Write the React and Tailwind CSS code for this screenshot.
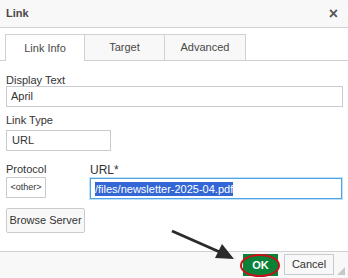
import React from "react";

export default function App() {
  return (
    <div className="relative flex h-[278px] w-[348px] flex-col overflow-hidden bg-white text-[12px] text-[#333] [font-family:'Liberation_Sans',Arial,sans-serif]">
      {/* header */}
      <div className="flex h-[28px] items-center justify-between border-b border-[#d1d1d1] bg-[#f8f8f8] pl-[6px] pr-[10px]">
        <span className="text-[11px] font-bold text-[#484848]">Link</span>
        <span className="text-[16px] font-bold leading-none text-[#555]">×</span>
      </div>

      {/* tabs */}
      <div className="mt-[6px] flex border-b border-[#d1d1d1] pl-[5px]">
        <div className="-mb-px flex h-[27px] w-[80px] items-center justify-center border border-b-0 border-[#d1d1d1] bg-white text-[11px] text-[#484848]">
          Link Info
        </div>
        <div className="flex h-[26px] w-[80px] items-center justify-center border border-l-0 border-[#d1d1d1] border-b-0 bg-[#f8f8f8] text-[11px] text-[#484848]">
          Target
        </div>
        <div className="flex h-[26px] w-[81px] items-center justify-center border border-l-0 border-[#d1d1d1] border-b-0 bg-[#f8f8f8] text-[11px] text-[#484848]">
          Advanced
        </div>
      </div>

      {/* body */}
      <div className="flex flex-1 flex-col px-[6px] pt-[13px]">
        <div className="text-[11px] leading-[12px]">Display Text</div>
        <div className="flex h-[21px] w-[337px] items-center border border-[#c9cccf] px-[4px] text-[11px]">April</div>

        <div className="mt-[7px] text-[11px] leading-[12px]">Link Type</div>
        <div className="mt-[4px] flex h-[21px] w-[105px] items-center border border-[#c9cccf] px-[5px] text-[11px]">URL</div>

        <div className="mt-[12px] flex">
          <div className="flex w-[84px] flex-col">
            <div className="text-[11px] leading-[12px]">Protocol</div>
            <div className="mt-[2px] flex h-[21px] w-[40px] items-center justify-center border border-[#c9cccf] text-[9px]">&lt;other&gt;</div>
          </div>
          <div className="flex flex-col pt-[1px]">
            <div className="text-[12px] leading-[13px]">URL*</div>
            <div className="mt-[1px] flex h-[21px] w-[252px] items-center border border-[#4fa3e6] px-[4px] text-[11px] shadow-[0_0_0_1px_#bde0fb]">
              <span className="bg-[#3367d6] leading-[14px] text-white">/files/newsletter-2025-04.pdf</span>
            </div>
          </div>
        </div>

        <div className="mt-[9px] flex h-[25px] w-[79px] items-center justify-center rounded-[2px] border border-[#c9cccf] bg-[#f8f8f8] text-[11px]">
          Browse Server
        </div>
      </div>

      {/* footer */}
      <div className="flex h-[27px] items-start justify-end gap-[6px] border-t border-[#d1d1d1] bg-[#f8f8f8] pr-[14px] pt-[2px]">
        <div className="relative flex h-[22px] w-[35px] items-center justify-center bg-[#098238] text-[11px] font-bold text-white">
          OK
          <div className="absolute left-[-3px] top-[0px] h-[23px] w-[40px] rounded-[50%] border-2 border-[#c8101a]" />
        </div>
        <div className="flex h-[21px] w-[50px] items-center justify-center border border-[#c9cccf] bg-[#f8f8f8] text-[11px]">
          Cancel
        </div>
      </div>

      {/* resize grip */}
      <svg className="absolute bottom-[3px] right-[3px]" width="8" height="8" viewBox="0 0 8 8">
        <polygon points="8,0 8,8 0,8" fill="#c8c8c8" />
      </svg>

      {/* arrow */}
      <svg className="absolute left-0 top-0" width="348" height="278" viewBox="0 0 348 278">
        <line x1="172" y1="231" x2="222" y2="253" stroke="#2b2b2b" strokeWidth="3" />
        <polygon points="234,259 215,258 222,244" fill="#2b2b2b" />
      </svg>
    </div>
  );
}
